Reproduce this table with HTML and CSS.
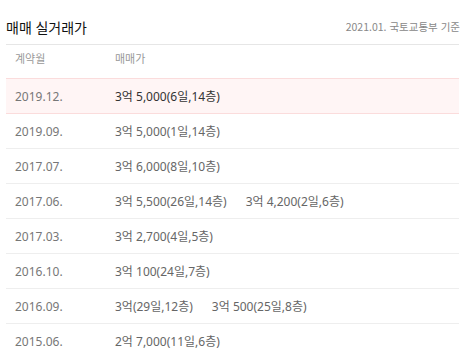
FILE: index.html
```html
<!DOCTYPE html>
<html lang="ko">
<head>
<meta charset="utf-8">
<link rel="stylesheet" href="styles.css">
</head>
<body>
<div class="panel">
  <div class="head">
    <h2 class="title">매매 실거래가</h2>
    <span class="note">2021.01. 국토교통부 기준</span>
  </div>
  <div class="cols">
    <span class="c-date">계약월</span>
    <span class="c-price">매매가</span>
  </div>
  <div class="row active">
    <span class="c-date">2019.12.</span>
    <span class="c-price"><span class="deal">3억 5,000(6일,14층)</span></span>
  </div>
  <div class="row">
    <span class="c-date">2019.09.</span>
    <span class="c-price"><span class="deal">3억 5,000(1일,14층)</span></span>
  </div>
  <div class="row">
    <span class="c-date">2017.07.</span>
    <span class="c-price"><span class="deal">3억 6,000(8일,10층)</span></span>
  </div>
  <div class="row">
    <span class="c-date">2017.06.</span>
    <span class="c-price"><span class="deal">3억 5,500(26일,14층)</span><span class="deal">3억 4,200(2일,6층)</span></span>
  </div>
  <div class="row">
    <span class="c-date">2017.03.</span>
    <span class="c-price"><span class="deal">3억 2,700(4일,5층)</span></span>
  </div>
  <div class="row">
    <span class="c-date">2016.10.</span>
    <span class="c-price"><span class="deal">3억 100(24일,7층)</span></span>
  </div>
  <div class="row">
    <span class="c-date">2016.09.</span>
    <span class="c-price"><span class="deal">3억(29일,12층)</span><span class="deal">3억 500(25일,8층)</span></span>
  </div>
  <div class="row">
    <span class="c-date">2015.06.</span>
    <span class="c-price"><span class="deal">2억 7,000(11일,6층)</span></span>
  </div>
</div>
</body>
</html>
```

FILE: styles.css
```css
html, body {
  margin: 0;
  padding: 0;
  background: #ffffff;
}
body {
  font-family: "Noto Sans", "Noto Sans CJK KR", sans-serif;
  overflow: hidden;
}
.panel {
  width: 453px;
  margin-left: 6px;
}
.head {
  display: flex;
  justify-content: space-between;
  align-items: flex-end;
  height: 45px;
  padding-bottom: 8px;
  border-bottom: 1px solid #e6e6e6;
  box-sizing: border-box;
}
.title {
  margin: 0;
  font-size: 14px;
  font-weight: normal;
  color: #111111;
  line-height: 16px;
  font-family: "Noto Sans", "Noto Sans CJK KR", sans-serif;
}
.note {
  font-family: "Noto Sans CJK KR", sans-serif;
  font-size: 10.5px;
  color: #888888;
  line-height: 14px;
  margin-right: -1px;
  margin-bottom: 2px;
}
.cols {
  display: flex;
  height: 33px;
  padding-top: 6px;
  box-sizing: border-box;
  font-size: 11px;
  line-height: 16px;
  color: #999999;
}
.c-date {
  width: 100px;
  padding-left: 9px;
  flex: none;
}
.c-price {
  display: flex;
  gap: 19px;
}
.row {
  display: flex;
  align-items: center;
  height: 35px;
  box-sizing: border-box;
  border-bottom: 1px solid #eeeeee;
  font-size: 12px;
  color: #666666;
}
.row .c-date {
  color: #777777;
}
.row.active {
  background: #fff5f5;
  border-top: 1px solid #fbdcdc;
  border-bottom: 1px solid #fbdcdc;
  height: 36px;
}
.row.active .c-price {
  color: #333333;
}
```
